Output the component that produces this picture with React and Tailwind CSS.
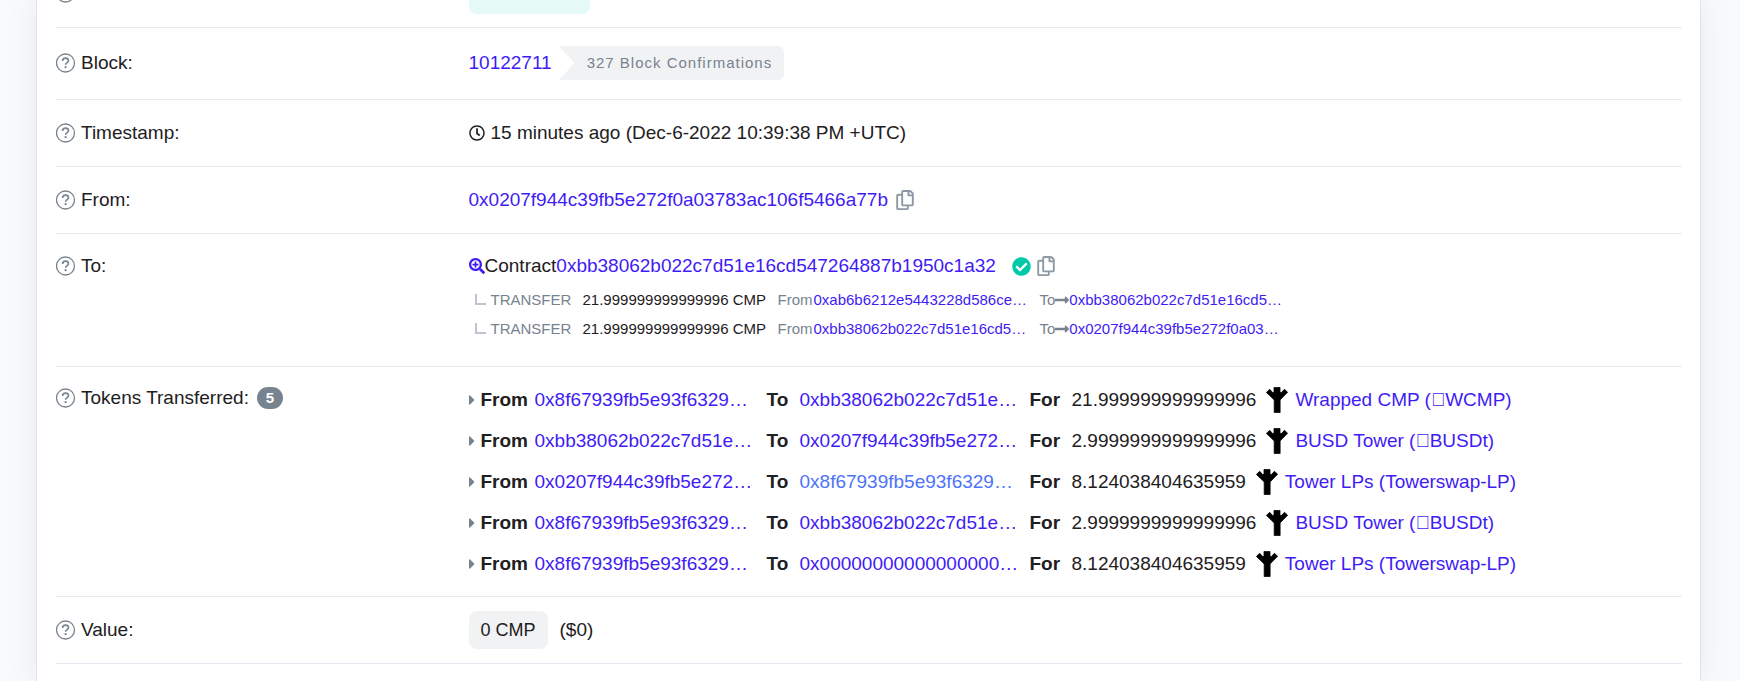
import { FaCaretRight, FaCheckCircle, FaLongArrowAltRight, FaRegClock, FaRegCopy, FaSearchPlus } from "react-icons/fa";

function HelpIcon() {
  return (
    <svg className="size-5 shrink-0 text-[#77838f]" viewBox="0 0 20 20" fill="none" stroke="currentColor" aria-hidden="true">
      <circle cx="9.5" cy="10" r="9" strokeWidth="1.3" />
      <path d="M6.6 8c0-1.7 1.2-2.9 2.9-2.9s3 1.1 3 2.6c0 2-2.9 2-2.9 4.1" strokeWidth="1.6" />
      <circle cx="9.6" cy="14.2" r="1.1" fill="currentColor" stroke="none" />
    </svg>
  );
}

function TokenIcon() {
  return (
    <svg className="mr-[7px] ml-[10px] h-[26px] w-[22px] shrink-0" viewBox="0 0 22 26" fill="#000" stroke="#000" strokeWidth="0.8" strokeLinejoin="round" aria-hidden="true">
      <path d="M8 .4h6v5l1.4.2 3-3.3 3.2 2.9-7.5 7.7v12.7H8.2V12.9L.4 5.4l3.3-3.1 3 3.3L8 5.4z" />
    </svg>
  );
}

function Row({ label, badge, className, children }) {
  return (
    <div className={`grid grid-cols-[1fr_3fr] gap-2 border-b border-[#e7eaf3] ${className}`}>
      <dt className="flex h-[38px] items-center">
        <HelpIcon />
        <span className="ml-[5px]">{label}</span>
        {badge && (
          <span className="ml-2 flex h-[22px] w-[26px] items-center justify-center rounded-full bg-[#77838f] text-[15px] font-bold text-white">{badge}</span>
        )}
      </dt>
      <dd className="min-w-0">{children}</dd>
    </div>
  );
}

function Link({ className = "text-[#3f1cf5]", children }) {
  return <a href="#" className={className}>{children}</a>;
}

function CopyButton({ className = "" }) {
  return (
    <button type="button" aria-label="Copy address" className={`text-[#8c98a4] ${className}`}>
      <FaRegCopy className="h-5 w-[18px]" />
    </button>
  );
}

const internals = [
  { from: "0xab6b6212e5443228d586ce…", to: "0xbb38062b022c7d51e16cd5…", amount: "21.999999999999996" },
  { from: "0xbb38062b022c7d51e16cd5…", to: "0x0207f944c39fb5e272f0a03…", amount: "21.999999999999996" },
];

const WCMP = "Wrapped CMP (\u{F0000}WCMP)";
const BUSD = "BUSD Tower (\u{F0000}BUSDt)";
const LP = "Tower LPs (Towerswap-LP)";

const transfers = [
  { from: "0x8f67939fb5e93f6329…", to: "0xbb38062b022c7d51e…", amount: "21.999999999999996", token: WCMP },
  { from: "0xbb38062b022c7d51e…", to: "0x0207f944c39fb5e272…", amount: "2.9999999999999996", token: BUSD },
  { from: "0x0207f944c39fb5e272…", to: "0x8f67939fb5e93f6329…", amount: "8.124038404635959", token: LP, hovered: true },
  { from: "0x8f67939fb5e93f6329…", to: "0xbb38062b022c7d51e…", amount: "2.9999999999999996", token: BUSD },
  { from: "0x8f67939fb5e93f6329…", to: "0x00000000000000000…", amount: "8.124038404635959", token: LP },
];

export default function App() {
  return (
    <div className="min-h-screen bg-[#f8fafc] pr-[39px] pl-9 font-['Liberation_Sans',Arial,sans-serif] text-[19px] leading-[28px] whitespace-nowrap text-[#1e2022]">
      <main className="min-h-screen border-x border-[#e0e2f3] bg-white pr-[18px] pl-[19px] shadow-[0_0_28px_rgba(110,105,95,0.12)]">
        <dl>
          <div className="grid h-7 grid-cols-[1fr_3fr] gap-2 overflow-hidden border-b border-[#e7eaf3]">
            <dt className="-mt-[17px]"><HelpIcon /></dt>
            <dd><span className="block h-[14px] w-[121px] rounded-b-lg bg-[#e5faf6]" /></dd>
          </div>

          <Row label="Block:" className="pt-4 pb-[17px]">
            <div className="flex h-[38px] items-center">
              <Link>10122711</Link>
              <span className="ml-[7px] flex h-[34px] items-center rounded-r-md bg-[#f1f2f4] pr-3 pl-7 text-[15px] tracking-[1px] text-[#77838f] [clip-path:polygon(0_0,100%_0,100%_100%,0_100%,16px_50%)]">
                327 Block Confirmations
              </span>
            </div>
          </Row>

          <Row label="Timestamp:" className="py-[14px]">
            <div className="flex h-[38px] items-center">
              <FaRegClock className="size-4" />
              <span className="ml-[6px]">15 minutes ago (Dec-6-2022 10:39:38 PM +UTC)</span>
            </div>
          </Row>

          <Row label="From:" className="py-[14px]">
            <div className="flex h-[38px] items-center">
              <Link>0x0207f944c39fb5e272f0a03783ac106f5466a77b</Link>
              <CopyButton className="ml-2" />
            </div>
          </Row>

          <Row label="To:" className="pt-[13px] pb-[23px]">
            <div className="flex h-[38px] items-center">
              <FaSearchPlus className="size-4 text-[#3f1cf5]" />
              <span>Contract</span>
              <Link>0xbb38062b022c7d51e16cd547264887b1950c1a32</Link>
              <FaCheckCircle className="ml-4 size-[19px] text-[#00c9a7]" />
              <CopyButton className="ml-[6px]" />
            </div>
            <ul className="text-[15px] leading-[29px]">
              {internals.map((t) => (
                <li key={t.from} className="flex items-center pl-[6px] text-[#77838f]">
                  <span className="h-[11px] w-[11px] border-b-2 border-l-2 border-[#bdc5d1]" />
                  <span className="ml-[5px] w-[92px]">TRANSFER</span>
                  <span className="w-[195px] text-[#1e2022]">{t.amount} CMP</span>
                  <span className="w-9">From</span>
                  <span className="w-[226px]"><Link>{t.from}</Link></span>
                  <span>To</span>
                  <FaLongArrowAltRight className="h-4 w-[14px]" />
                  <Link>{t.to}</Link>
                </li>
              ))}
            </ul>
          </Row>

          <Row label="Tokens Transferred:" badge="5" className="py-3">
            <ul>
              {transfers.map((t, i) => (
                <li key={i} className="flex h-[41px] items-center">
                  <FaCaretRight className="h-4 w-[6px] text-[#77838f]" />
                  <b className="ml-[6px] w-[54px]">From</b>
                  <span className="w-[232px]"><Link>{t.from}</Link></span>
                  <b className="w-[33px]">To</b>
                  <span className="w-[230px]">
                    <Link className={t.hovered ? "text-[#4e73f8]" : "text-[#3f1cf5]"}>{t.to}</Link>
                  </span>
                  <b className="w-[42px]">For</b>
                  <span>{t.amount}</span>
                  <TokenIcon />
                  <Link>{t.token}</Link>
                </li>
              ))}
            </ul>
          </Row>

          <Row label="Value:" className="py-[14px]">
            <div className="flex h-[38px] items-center">
              <span className="flex h-[38px] items-center rounded-lg bg-[#f1f2f4] px-3 text-[18px]">0 CMP</span>
              <span className="ml-3">($0)</span>
            </div>
          </Row>
        </dl>
      </main>
    </div>
  );
}
